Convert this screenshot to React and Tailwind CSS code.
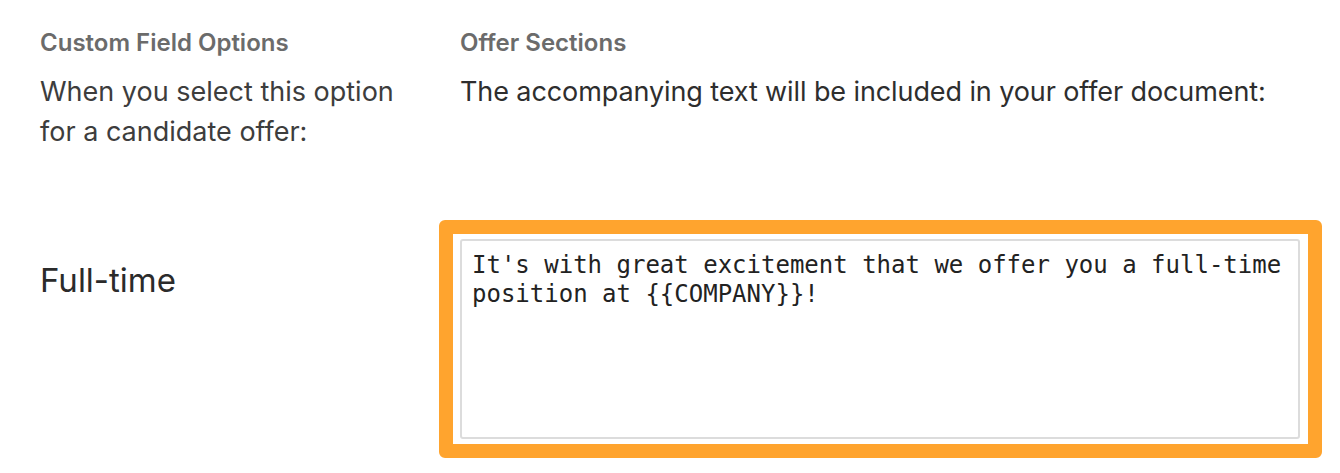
export default function App() {
  return (
    <div className="w-[1340px] h-[473px] bg-white overflow-hidden" style={{ fontFamily: '"Inter", "Liberation Sans", sans-serif' }}>
      <div className="grid grid-cols-[420px_840px] pl-[40px] pt-[28px]">
        <div>
          <div className="text-[24px] leading-[30px] font-semibold text-[#6b6b6b]">Custom Field Options</div>
          <div className="mt-[14px] text-[27px] leading-[40px] text-[#3d3d3d]">When you select this option<br />for a candidate offer:</div>
        </div>
        <div>
          <div className="text-[24px] leading-[30px] font-semibold text-[#6b6b6b]">Offer Sections</div>
          <div className="mt-[14px] text-[27px] leading-[40px] text-[#2e2e2e] tracking-[-0.1px]">The accompanying text will be included in your offer document:</div>
        </div>
      </div>
      <div className="grid grid-cols-[420px_840px] pl-[40px] mt-[87px]">
        <div className="pt-[21px] text-[33px] leading-[40px] text-[#2b2b2b]">Full-time</div>
        <div className="relative">
          <div className="absolute left-[-21px] top-[-19px] w-[883px] h-[238px] border-[14px] border-[#ffa42e] rounded-[6px] pointer-events-none" />
          <div className="h-[200px] border-2 border-[#dcdcdc] rounded-[3px] pl-[10px] pr-[11px] pt-[10px] text-[24px] leading-[29px] text-[#222]" style={{ fontFamily: '"DejaVu Sans Mono", monospace' }}>
            It's with great excitement that we offer you a full-time position at {"{{COMPANY}}"}!
          </div>
        </div>
      </div>
    </div>
  );
}
